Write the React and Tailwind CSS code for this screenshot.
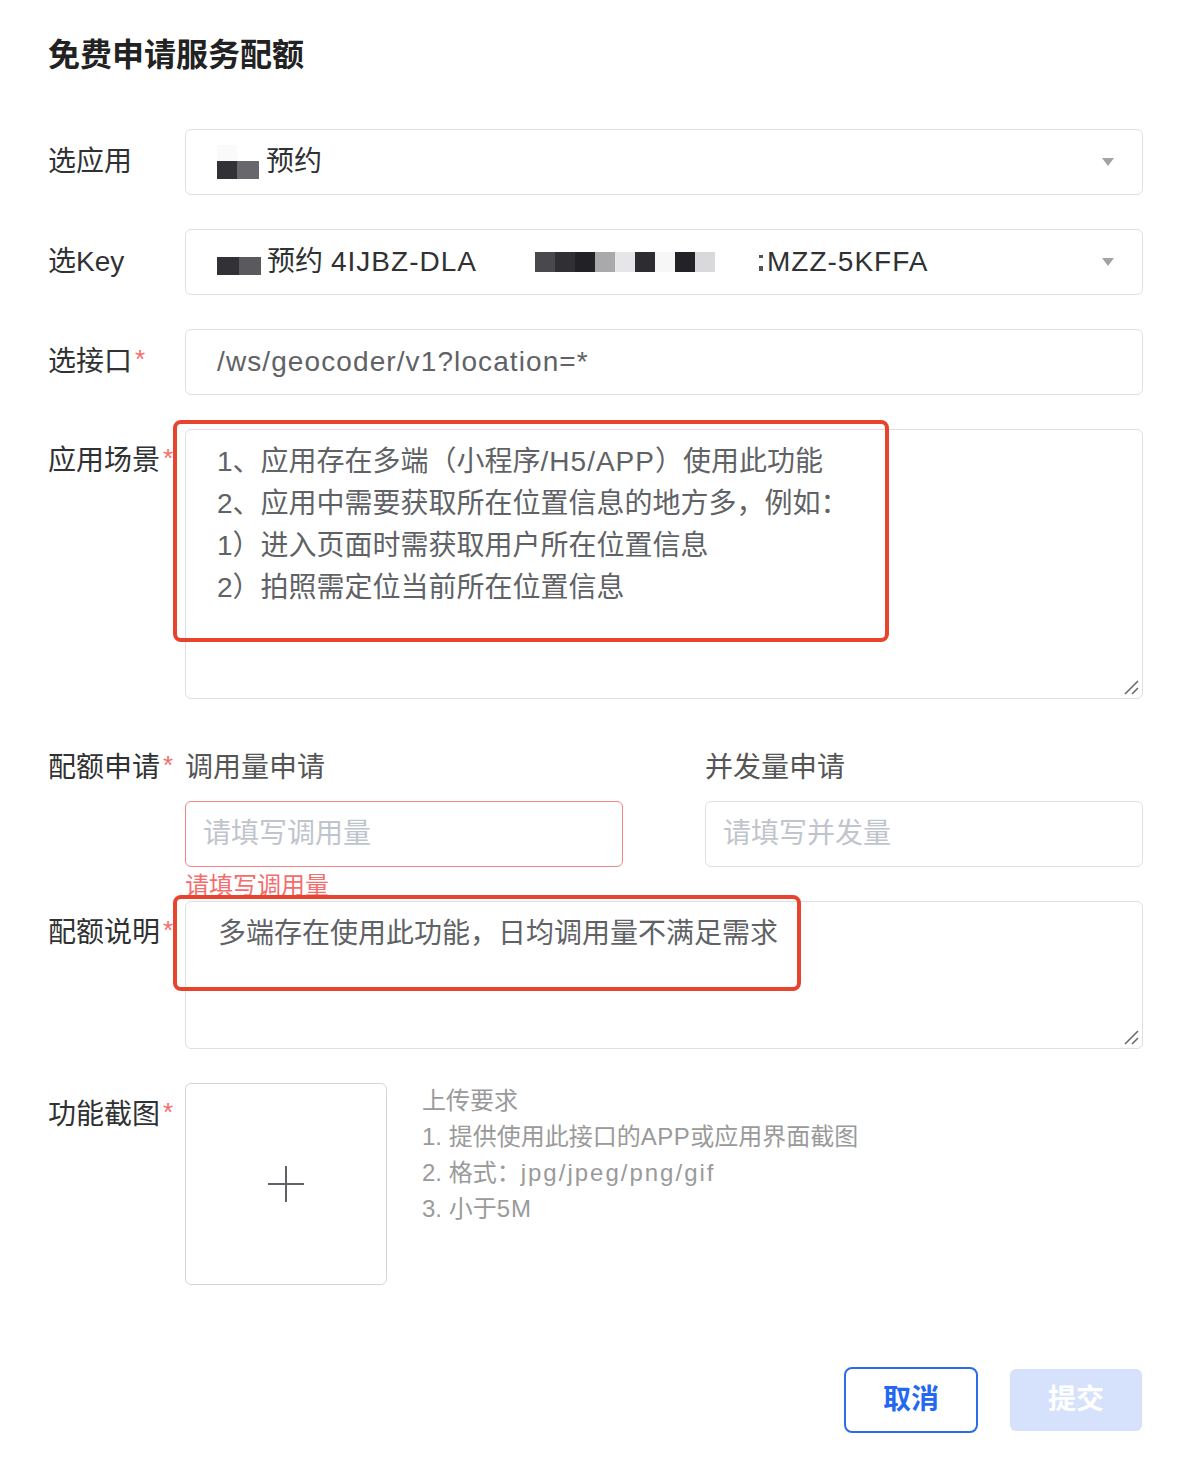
import React from 'react'

const mosaic = ['#48484d', '#2f2f34', '#222226', '#a9a9ab', '#e6e6e8', '#2d2d31', '#f7f7f7', '#232327', '#d9d9db']

const Star = () => <span className="relative -top-[3px] ml-[3px] text-[26px] text-[#f56c6c]">*</span>

const Label = ({ children, required, className = '' }) => (
  <div className={`w-[137px] shrink-0 whitespace-nowrap text-[28px] text-[#303133] ${className}`}>
    {children}
    {required && <Star />}
  </div>
)

const Arrow = () => (
  <span className="h-0 w-0 shrink-0 border-x-[6px] border-t-[8px] border-x-transparent border-t-[#a3a3a3]" />
)

const ResizeGrip = () => (
  <svg className="absolute bottom-[3px] right-[3px]" width="16" height="16" viewBox="0 0 16 16">
    <path d="M2 15 L15 2 M9 15 L15 9" stroke="#6b6b6b" strokeWidth="1.6" />
  </svg>
)

const Blur = () => (
  <span className="mr-[7px] inline-flex flex-col">
    <span className="flex h-[16px]">
      <span className="w-[20px] bg-[#fafafa]" />
      <span className="w-[22px] bg-white" />
    </span>
    <span className="flex h-[18px]">
      <span className="w-[20px] bg-[#323236]" />
      <span className="w-[22px] bg-[#68686c]" />
    </span>
  </span>
)

export default function App() {
  return (
    <div className="min-h-[1464px] w-[1188px] bg-white pl-[48px] pr-[45px] pt-[35px] font-[family-name:'Liberation_Sans','Noto_Sans_CJK_SC',sans-serif]">
      <h1 className="text-[32px] font-bold leading-[40px] text-[#222]">免费申请服务配额</h1>

      <div className="mt-[54px] flex flex-col gap-[34px]">
        <div className="flex items-center">
          <Label>选应用</Label>
          <div className="flex h-[66px] flex-1 items-center rounded-[6px] border border-[#dcdfe6] pl-[31px] pr-[28px]">
            <div className="flex flex-1 items-center text-[28px] text-[#303133]">
              <Blur />
              预约
            </div>
            <Arrow />
          </div>
        </div>

        <div className="flex items-center">
          <Label>选Key</Label>
          <div className="flex h-[66px] flex-1 items-center rounded-[6px] border border-[#dcdfe6] pl-[31px] pr-[28px]">
            <div className="flex flex-1 items-center whitespace-nowrap text-[28px] text-[#303133]">
              <span className="mr-[6px] mt-[8px] flex h-[18px]">
                <span className="w-[22px] bg-[#323236]" />
                <span className="w-[22px] bg-[#5a5a5e]" />
              </span>
              预约 <span className="ml-[8px] tracking-[1px]">4IJBZ-DLA</span>
              <span className="ml-[58px] flex h-[20px]">
                {mosaic.map((c, i) => (
                  <span key={i} className="w-[20px]" style={{ backgroundColor: c }} />
                ))}
              </span>
              <span className="ml-[44px] mr-[4px] mt-[2px] flex h-[16px] w-[4px] flex-col justify-between">
                <span className="h-[3px] bg-[#555]" />
                <span className="h-[5px] bg-[#555]" />
              </span>
              <span className="tracking-[1px]">MZZ-5KFFA</span>
            </div>
            <Arrow />
          </div>
        </div>

        <div className="flex items-center">
          <Label required>选接口</Label>
          <div className="flex h-[66px] flex-1 items-center rounded-[6px] border border-[#dcdfe6] pl-[31px] text-[28px] tracking-[1.1px] text-[#606266]">
            /ws/geocoder/v1?location=*
          </div>
        </div>

        <div className="flex items-start">
          <Label required className="pt-[11px] leading-[42px]">应用场景</Label>
          <div className="relative h-[270px] flex-1 rounded-[6px] border border-[#dcdfe6] pl-[31px] pt-[11px] text-[28px] leading-[42px] text-[#606266]">
            <p>1、应用存在多端（小程序<span className="tracking-[1px]">/H5/APP</span>）使用此功能</p>
            <p>2、应用中需要获取所在位置信息的地方多，例如：</p>
            <p>1）进入页面时需获取用户所在位置信息</p>
            <p>2）拍照需定位当前所在位置信息</p>
            <ResizeGrip />
            <div className="absolute -left-[13px] -top-[10px] h-[222px] w-[716px] rounded-[8px] border-[4px] border-[#e8432d]" />
          </div>
        </div>
      </div>

      <div className="mt-[47px] flex">
        <Label required className="pt-[2px] leading-[40px]">配额申请</Label>
        <div className="grid flex-1 grid-cols-2 gap-x-[82px]">
          <div>
            <div className="pt-[2px] text-[28px] leading-[40px] text-[#555]">调用量申请</div>
            <div className="relative mt-[13px]">
              <div className="flex h-[66px] items-center rounded-[6px] border border-[#f08585] pl-[17px] text-[28px] text-[#c0c4cc]">
                请填写调用量
              </div>
              <div className="absolute left-0 top-[70px] text-[24px] leading-[30px] text-[#f56c6c]">请填写调用量</div>
            </div>
          </div>
          <div>
            <div className="pt-[2px] text-[28px] leading-[40px] text-[#555]">并发量申请</div>
            <div className="mt-[13px] flex h-[66px] items-center rounded-[6px] border border-[#dcdfe6] pl-[17px] text-[28px] text-[#c0c4cc]">
              请填写并发量
            </div>
          </div>
        </div>
      </div>

      <div className="relative mt-[34px] flex items-start">
        <Label required className="pt-[11px] leading-[42px]">配额说明</Label>
        <div className="relative h-[148px] flex-1 rounded-[6px] border border-[#dcdfe6] bg-white pl-[32px] pt-[11px] text-[28px] leading-[42px] text-[#606266]">
          多端存在使用此功能，日均调用量不满足需求
          <ResizeGrip />
          <div className="absolute -left-[13px] -top-[7px] h-[96px] w-[628px] rounded-[8px] border-[4px] border-[#e8432d]" />
        </div>
      </div>

      <div className="mt-[34px] flex items-start">
        <Label required className="pt-[12px] leading-[40px]">功能截图</Label>
        <div className="flex h-[202px] w-[202px] items-center justify-center rounded-[6px] border border-[#d4d4d4]">
          <svg width="38" height="38" viewBox="0 0 38 38">
            <path d="M19 1 V37 M1 19 H37" stroke="#5f6166" strokeWidth="2" />
          </svg>
        </div>
        <div className="ml-[35px] text-[24px] leading-[36px] text-[#9a9a9a]">
          <p>上传要求</p>
          <p>1. 提供使用此接口的<span className="tracking-[0.5px]">APP</span>或应用界面截图</p>
          <p>2. 格式：<span className="tracking-[2px]">jpg/jpeg/png/gif</span></p>
          <p>3. 小于<span className="tracking-[1px]">5M</span></p>
        </div>
      </div>

      <div className="mt-[82px] flex items-center justify-end gap-[32px] pr-px">
        <button className="h-[66px] w-[134px] rounded-[8px] border-2 border-[#2a6cf0] bg-white text-[28px] font-bold text-[#2468f2]">
          取消
        </button>
        <button className="h-[62px] w-[132px] rounded-[6px] bg-[#d6e2fb] text-[28px] font-bold text-white">
          提交
        </button>
      </div>
    </div>
  )
}
